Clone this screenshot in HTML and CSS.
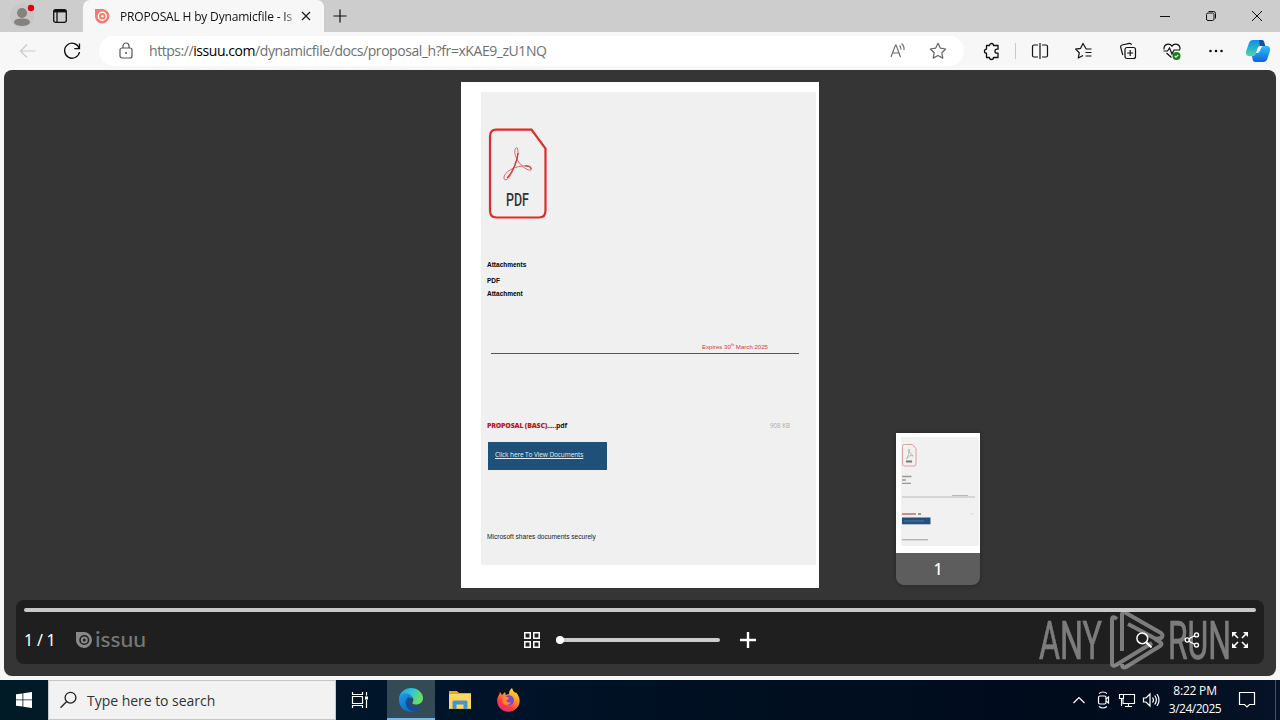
FILE: index.html
```html
<!DOCTYPE html>
<html lang="en">
<head>
<meta charset="utf-8">
<title>PROPOSAL H by Dynamicfile - Issuu</title>
<link rel="stylesheet" href="styles.css">
</head>
<body>
<div class="desktop">
  <header class="titlebar">
    <svg class="profile" width="32" height="32" viewBox="0 0 32 32"><circle cx="16" cy="16" r="12" fill="#c8c7c6"/><circle cx="16" cy="13" r="5" fill="#85817e"/><path d="M8 23c0-4 4-4.500 8-4.500s8 .5 8 4.500c-2 4-14 4-16 0z" fill="#85817e"/><circle cx="25" cy="8" r="3.200" fill="#e3000b"/></svg>
    <svg class="tab-menu" width="16" height="16" viewBox="0 0 16 16" fill="none" stroke="#111"><rect x="1.700" y="1.700" width="12.600" height="12.600" rx="2" stroke-width="1.300"/><path d="M2 3.200h12" stroke-width="2.400"/><path d="M5 4v10" stroke-width="1.300"/></svg>
    <div class="tab">
      <svg width="16" height="16" viewBox="0 0 16 16"><path d="M1 1h7.500A7.200 7.200 0 1 1 1 8z" fill="#f47c6e"/><circle cx="8.300" cy="8.200" r="4" fill="none" stroke="#fff" stroke-width="1.400"/><circle cx="8.300" cy="8.200" r="1.300" fill="#fff"/></svg>
      <span class="tab-title">PROPOSAL H by Dynamicfile - Is</span>
      <svg width="16" height="16" viewBox="0 0 16 16" stroke="#222" stroke-width="1.300"><path d="M4 4l8 8M12 4l-8 8"/></svg>
    </div>
    <svg class="new-tab" width="16" height="16" viewBox="0 0 16 16" stroke="#111" stroke-width="1.200"><path d="M8 1.500v13M1.500 8h13"/></svg>
    <div class="window-buttons">
      <svg width="46" height="32" viewBox="0 0 46 32" stroke="#111"><path d="M18 16.500h10"/></svg>
      <svg width="46" height="32" viewBox="0 0 46 32" stroke="#111" fill="none"><rect x="18.500" y="13" width="7.500" height="7.500" rx="1.500"/><path d="M20.500 11.500h5a2 2 0 0 1 2 2v5"/></svg>
      <svg width="46" height="32" viewBox="0 0 46 32" stroke="#111"><path d="M18 11l10 10M28 11l-10 10"/></svg>
    </div>
  </header>

  <nav class="toolbar">
    <svg class="back" width="20" height="20" viewBox="0 0 20 20" fill="none" stroke="#c9c9c9" stroke-width="1.200"><path d="M17.500 10h-15M9 3.500L2.500 10 9 16.500"/></svg>
    <svg class="refresh" width="20" height="20" viewBox="0 0 20 20" fill="none" stroke="#111" stroke-width="1.300"><path d="M17.300 7.500A7.500 7.500 0 1 0 17.500 11M17.500 2.500v5.200h-5.200"/></svg>
    <div class="omnibox">
      <svg class="lock" width="20" height="20" viewBox="0 0 20 20" fill="none" stroke="#555" stroke-width="1.200"><rect x="4" y="7" width="12" height="10" rx="2"/><path d="M7 7V5a3 3 0 0 1 6 0v2"/><circle cx="10" cy="12" r="1" fill="#555" stroke="none"/></svg>
      <span class="url">https://<b>issuu.com</b>/dynamicfile/docs/proposal_h?fr=xKAE9_zU1NQ</span>
      <svg class="read" width="20" height="20" viewBox="0 0 20 20" fill="none" stroke="#666" stroke-width="1.100"><path d="M3 16L7.500 4h.6L12.500 16M4.500 12h6.500M11.500 4.500q1.500 1.500 1.500 4M13.500 2.500q3 2.500 2.500 6.500"/></svg>
      <svg width="20" height="20" viewBox="0 0 20 20" fill="none" stroke="#666" stroke-width="1.200" stroke-linejoin="round"><path d="M10 2.300l2.400 4.900 5.300.8-3.900 3.700 1 5.400-4.800-2.600-4.800 2.600 1-5.400L2.300 8l5.300-.8z"/></svg>
    </div>
    <svg class="extensions" width="20" height="20" viewBox="0 0 20 20" fill="none" stroke="#111" stroke-width="1.300" stroke-linejoin="round"><path d="M5.500 4.500h3a2 2 0 0 1 4 0H17v3.700h-1a2 2 0 0 0 0 4h1v4.300h-4.500a2 2 0 0 1-4 0h-3v-4.300a2 2 0 0 1 0-4z"/></svg>
    <i class="divider"></i>
    <svg class="split" width="20" height="20" viewBox="0 0 20 20" fill="none" stroke="#111" stroke-width="1.200"><path d="M8 4H4Q2.500 4 2.500 5.500v9Q2.500 16 4 16h4M12 4h4q1.500 0 1.500 1.500v9Q17.500 16 16 16h-4M10 2v16"/></svg>
    <svg class="tool" width="20" height="20" viewBox="0 0 20 20" fill="none" stroke="#111" stroke-width="1.200" stroke-linejoin="round"><path d="M17.500 8h-5.300L9 2.500 6.600 7.300l-5 .8 3.700 3.600-1 5.300L9 14.500M11.500 11.500h6M11.500 15h6"/></svg>
    <svg class="tool" width="20" height="20" viewBox="0 0 20 20" fill="none" stroke="#111" stroke-width="1.200"><rect x="7" y="6.500" width="10.500" height="11" rx="2"/><path d="M12.200 9v6M9.200 12h6M4.800 14L2.600 6Q2.400 4.500 4 4l7.500-1.700q1.500-.2 2 1.600"/></svg>
    <svg class="tool" width="20" height="20" viewBox="0 0 20 20" fill="none" stroke="#111" stroke-width="1.200"><path d="M2 8.500C1.500 3 7.500 1.500 10 5.200 12.500 1.500 18.500 3 18 8.500M1.500 10h4l2-3 2.500 6 2-4h6M4.500 12l5 4.500"/><circle cx="14.500" cy="15" r="4" fill="#168216" stroke="none"/><path d="M12.800 15l1.200 1.200 2.300-2.300" stroke="#fff"/></svg>
    <svg class="tool" width="20" height="20" viewBox="0 0 20 20" fill="#111"><circle cx="4.500" cy="10" r="1.300"/><circle cx="10" cy="10" r="1.300"/><circle cx="15.500" cy="10" r="1.300"/></svg>
    <svg class="copilot" width="24" height="24" viewBox="0 0 24 24"><defs><linearGradient id="cg" x2="0" y2="1"><stop offset="0" stop-color="#128be8"/><stop offset=".55" stop-color="#28b6ce"/><stop offset="1" stop-color="#57d595"/></linearGradient><linearGradient id="cb" x2="0" y2="1"><stop offset="0" stop-color="#2bc0f4"/><stop offset="1" stop-color="#1263dd"/></linearGradient></defs><path d="M7 1h8q2 0 2.500 3l.5 3h-4q-2 0-3 4l-1 3q-1 3-4 3H2q-3-1-1.500-6L3 4q1-3 4-3z" fill="url(#cg)"/><path d="M13 1h3q2 0 2.500 3l.8 3H14z" fill="#174cab"/><path d="M17 7h5q3 1 1.600 6l-2.300 7q-1 3-4 3H9q-2 0-2.500-3L6 17q3 0 4-3h2q2-1 3-5z" fill="url(#cb)"/></svg>
  </nav>

  <main class="viewer">
    <article class="page">
      <div class="sheet">
        <svg class="pdf-logo" width="60" height="92" viewBox="0 0 60 92"><path d="M8 1.700H43.500L57.500 20.500V82.500Q57.500 89.500 51 89.500H8.500Q2 89.500 2 82.500V8.500Q2 1.700 8 1.700z" fill="none" stroke="#dc2b28" stroke-width="2.200"/><path d="M28 20c-2.500 3-1 8 2 13 4 6 10 10 13 9 2-3-4-4.500-9-4-9 1-17 6-18 11-.5 4 3 4 6-1 4-7 8-16 8-23 0-4-.8-6.500-2-5z" fill="none" stroke="#db6762" stroke-width="1"/><path d="M30 25c-1 8-5 19-11 25M37 38c4-.5 6 1 6 3" fill="none" stroke="#cf3531" stroke-width="1.200"/><text class="pdf-word" x="18" y="78" textLength="23" lengthAdjust="spacingAndGlyphs">PDF</text></svg>
        <h1 class="heading">Attachments</h1>
        <h2 class="kind">PDF</h2>
        <h2 class="kind-next">Attachment</h2>
        <p class="expires">Expires 30<sup>th</sup> March 2025</p>
        <div class="file-row"><span class="file"><b>PROPOSAL (BASC)</b>.....pdf</span><span class="size">908 KB</span></div>
        <a class="view-button"><span>Click here To View Documents</span></a>
        <p class="footnote">Microsoft shares documents securely</p>
      </div>
    </article>

    <aside class="thumb">
      <svg width="84" height="120" viewBox="0 0 84 120"><rect width="84" height="120" fill="#fff"/><rect x="5" y="4" width="78" height="109" fill="#f1f1f2"/><path d="M8.500 11.500h8l3.500 4V31q0 2-2 2H8.500q-2 0-2-2V13.500q0-2 2-2z" fill="none" stroke="#dfa0a0"/><path d="M13 16q-.5 3 4 7l-3-.5-3.500 3.500q3-4 2.500-10" fill="none" stroke="#aaa" stroke-width=".8"/><path d="M10 28.500h6" stroke="#777" stroke-width="2"/><path d="M6 43.500h9.500M6 47h4M6 50.300h9" stroke="#999" stroke-width="1.300"/><path d="M6 64h73" stroke="#ccc" stroke-width="1.500"/><path d="M56 62.500h16" stroke="#bbb"/><path d="M6 81h14" stroke="#bf7770" stroke-width="1.600"/><path d="M22 81h3" stroke="#777" stroke-width="1.500"/><path d="M74 81h4" stroke="#ddd"/><rect x="6" y="84.500" width="28.500" height="6.800" fill="#22517c"/><path d="M8 88h20" stroke="#6687a5" stroke-width=".8"/><path d="M6 106.800h26" stroke="#999"/></svg>
      <span class="thumb-number">1</span>
    </aside>

    <svg class="watermark" width="210" height="66" viewBox="0 0 210 66"><g class="mark-text"><text x="1" y="50.500" textLength="63" lengthAdjust="spacingAndGlyphs">ANY</text><text x="130" y="50.500" textLength="63" lengthAdjust="spacingAndGlyphs">RUN</text></g><g fill="none" stroke="#c9c9c9" stroke-width="4" stroke-linejoin="round"><path d="M79 11q-5-4-5 1v43q0 4 4 2l36-22"/><path d="M84 43V6q1-3 4-1l35 20q3 3 0 5l-5 1L90 16"/><path d="M117 31l5 3q3 2 0 4L88 59q-4 2-4-3"/></g></svg>

    <section class="controls">
      <div class="progress"></div>
      <div class="control-row">
        <span class="page-count">1 / 1</span>
        <svg class="issuu-mark" width="17" height="16" viewBox="0 0 17 16"><path d="M0 0h8.500A8 8 0 1 1 0 8z" fill="#898989"/><circle cx="8.300" cy="8" r="4.300" fill="none" stroke="#222" stroke-width="1.600"/><circle cx="8.300" cy="8" r="1.500" fill="#222"/></svg>
        <svg class="issuu-word" width="56" height="24" viewBox="0 0 56 24"><text x="-1" y="18.500" textLength="51" lengthAdjust="spacingAndGlyphs">issuu</text></svg>
        <svg class="grid-icon" width="16" height="16" viewBox="0 0 16 16" fill="none" stroke="#fff" stroke-width="1.500"><path d="M.8.8h5.400v5.400H.8zM9.800.8h5.400v5.400H9.800zM.8 9.800h5.400v5.400H.8zM9.800 9.800h5.400v5.400H9.800z"/></svg>
        <div class="zoom"><i class="knob"></i></div>
        <svg class="plus" width="16" height="16" viewBox="0 0 16 16" stroke="#fff" stroke-width="2.400"><path d="M8 0v16M0 8h16"/></svg>
        <div class="actions">
          <svg width="16" height="16" viewBox="0 0 16 16" fill="none" stroke="#fff"><circle cx="6.300" cy="6.300" r="5.400" stroke-width="1.500"/><path d="M10.200 10.200L15.500 15.500" stroke-width="2"/></svg>
          <svg width="16" height="16" viewBox="0 0 16 16" fill="none" stroke="#fff" stroke-width="1.400"><path d="M4.500 7l6.500-3.500M4.500 9l6.500 3.500"/><circle cx="3.200" cy="8" r="2.100"/><circle cx="12.500" cy="2.900" r="2"/><circle cx="12.500" cy="13.100" r="2"/></svg>
          <svg width="16" height="16" viewBox="0 0 16 16" stroke="#fff" stroke-width="1.600"><path d="M2 2l4 4M14 2l-4 4M2 14l4-4M14 14l-4-4"/><path d="M0 0h5L0 5zM16 0h-5l5 5zM0 16h5l-5-5zM16 16h-5l5-5z" fill="#fff" stroke="none"/></svg>
        </div>
      </div>
    </section>
  </main>

  <footer class="taskbar">
    <div class="start"><svg width="16" height="16" viewBox="0 0 16 16" fill="#fff"><path d="M0 2.300L6.500 1.400V7.500H0zM7.300 1.200L16 0v7.500H7.300zM0 8.300h6.500v6.300L0 13.700zM7.300 8.300H16V16l-8.700-1.200z"/></svg></div>
    <div class="search"><svg width="18" height="18" viewBox="0 0 18 18" fill="none" stroke="#222" stroke-width="1.300"><circle cx="10.500" cy="6.700" r="5.400"/><path d="M6.700 10.500L.5 16.700"/></svg><span>Type here to search</span></div>
    <svg class="task-view" width="18" height="18" viewBox="0 0 18 18" fill="none" stroke="#fff" stroke-width="1.200"><path d="M1.500 1v2.500h10V1M1.500 17v-2.500h10V17M1.500 5.500h10v7h-10zM15.500 1v3.500M15.500 9v8"/><path d="M14 5.500h3v3h-3z" fill="#fff" stroke="none"/></svg>
    <div class="app-active"><svg width="24" height="24" viewBox="0 0 24 24"><defs><linearGradient id="eg" x2="1" y2=".35"><stop offset="0" stop-color="#16a3e2"/><stop offset=".55" stop-color="#31c6d8"/><stop offset="1" stop-color="#6ade62"/></linearGradient><linearGradient id="eb" x2="1" y2="1"><stop offset="0" stop-color="#1c9ce6"/><stop offset="1" stop-color="#0b55a9"/></linearGradient></defs><path d="M0 11C.5 4 6 0 12 0c7 0 12 5 12 10 0 4-3 6.500-7 6.500-3 0-4-1-3.500-2 2.500-3 0-7-4.500-7C5 7.500 1 9 0 11z" fill="url(#eg)"/><path d="M0 12c0-6 5-7 8-6.500 4 .5 5.500 3.500 5 4.500-4 0-6 4-3.500 8 2.500 3.500 8 4 12.500.5-2 3.500-5.500 5.500-10 5.500C5 24 0 18.500 0 12z" fill="url(#eb)"/><path d="M9 9c-4 4-3 12 5 14.500 4-.5 6.500-2.500 8-5-5 2-9 1-11-2-1.500-2.500-.8-5 1-6z" fill="#0a4f98"/></svg></div>
    <svg class="explorer" width="22" height="20" viewBox="0 0 22 20"><path d="M0 1h8l2 2h12v16H0z" fill="#e5a823"/><path d="M0 4h22v14.500H0z" fill="#ffd75e"/><path d="M3.500 19v-7q0-1.500 1.500-1.500h12q1.500 0 1.500 1.500v7h-4v-4.500h-7V19z" fill="#4496d0"/></svg>
    <svg class="firefox" width="24" height="24" viewBox="0 0 24 24"><defs><linearGradient id="ff" x1=".8" x2=".2" y2="1"><stop offset="0" stop-color="#ffed35"/><stop offset=".35" stop-color="#ff9d22"/><stop offset=".7" stop-color="#ff3c45"/><stop offset="1" stop-color="#e52186"/></linearGradient></defs><path d="M3 4l2 3 3-3 .8 3 3.200-1q0-4 3-6 .5 3 3.500 5l.5-.8c6 6.800 4 14.800-1.500 17.800-5.500 3.500-13 1.500-16-4-2.500-5-1-9 .5-11z" fill="url(#ff)"/><path d="M9 8.500c3-3 8-.5 8 4 0 5-6.500 6.500-9 2.500l3-1.500-4-3.500z" fill="#7649d6"/><path d="M6 9q4-1.500 6 1-1.500 2.500-4 2.500 2 3 6 1.500-2 4-6.500 2.500Q4 14 6 9z" fill="#ff8a25"/></svg>
    <div class="tray">
      <svg width="24" height="24" viewBox="0 0 24 24" fill="none" stroke="#fff" stroke-width="1.200"><path d="M6.500 15L12 9.500l5.500 5.500"/></svg>
      <svg width="24" height="24" viewBox="0 0 24 24" fill="none" stroke="#fff" stroke-width="1.200"><rect x="7.500" y="8" width="7.500" height="8" rx="1.500"/><path d="M15 11l2.500-2v6L15 13M8 5.500q4-3 8 0M8 18.500q4 3 8 0"/></svg>
      <svg width="24" height="24" viewBox="0 0 24 24" fill="none" stroke="#fff" stroke-width="1.100"><path d="M9 6.500h10.500v9H8v-5M13.500 15.500v3M10 18.500h7M4.500 6.500h4v4h-4zM6.500 10.500v7.500"/></svg>
      <svg width="24" height="24" viewBox="0 0 24 24" fill="none" stroke="#fff" stroke-width="1.200"><path d="M4.500 10h2.500l4-4v12l-4-4H4.500zM13.500 9.500q2 2.500 0 5M15.700 7.500q3.300 4.500 0 9M18 6q4 6 0 12"/></svg>
      <div class="clock"><span class="time">8:22 PM</span><span class="date">3/24/2025</span></div>
      <svg class="notice" width="18" height="18" viewBox="0 0 18 18" fill="none" stroke="#fff" stroke-width="1.200"><path d="M1.500 1.500h15v12h-5L9 16l-2.500-2.500h-5z"/></svg>
      <i class="peek"></i>
    </div>
  </footer>
</div>
</body>
</html>
```
FILE: styles.css
```css
* { box-sizing: border-box; }
body { margin: 0; background: #f7f7f7; font-family: "Open Sans", "Noto Sans", sans-serif; color: #111; }
h1, h2, p { margin: 0; }
svg { display: block; flex: none; }
.desktop { width: 1280px; height: 720px; display: flex; flex-direction: column; overflow: hidden; }

.titlebar { height: 32px; flex: none; display: flex; align-items: center; background: #cdcdcd; }
.profile { margin-left: 6px; }
.tab-menu { margin-left: 14px; }
.tab { width: 241px; height: 32px; margin-left: 15px; padding: 0 10px 0 11px; display: flex; align-items: center; background: #f7f7f7; border-radius: 7px 7px 0 0; }
.tab-title { width: 174px; margin: 0 4px 0 10px; flex: none; white-space: nowrap; font-size: 12px; letter-spacing: -.17px; color: transparent; background: linear-gradient(90deg, #111 94%, #aaa 100%); background-clip: text; -webkit-background-clip: text; }
.new-tab { margin-left: 8px; }
.window-buttons { display: flex; margin-left: auto; }

.toolbar { height: 38px; flex: none; display: flex; align-items: center; background: #f7f7f7; }
.back { margin-left: 18px; }
.refresh { margin-left: 24px; }
.omnibox { width: 865px; height: 30px; margin-left: 17px; padding: 0 16px 0 17px; border-radius: 15px; background: #fff; display: flex; align-items: center; }
.url { margin-left: 13px; font-size: 14px; line-height: 20px; letter-spacing: -.44px; color: #707070; white-space: nowrap; }
.url b { font-weight: 400; color: #000; }
.read { margin-left: auto; margin-right: 20px; }
.extensions { margin-left: 17px; }
.divider { width: 1px; height: 16px; margin-left: 14px; background: #c8c8c8; }
.split { margin-left: 14px; }
.tool { margin-left: 24px; }
.copilot { margin-left: 20px; }

.viewer { position: relative; height: 606px; flex: none; margin: 0 4px 4px; padding: 12px; border-radius: 8px; background: #353535; display: flex; flex-direction: column; }
.page { width: 358px; height: 506px; flex: none; margin-left: 445px; padding: 10px 3px 0 20px; background: #fff; }
.sheet { width: 335px; height: 473px; padding: 36px 0 0 6px; background: #f0f0f0; color: #1b1b1b; font-family: "Liberation Sans", Arial, sans-serif; font-size: 6.500px; line-height: 10px; white-space: nowrap; }
.pdf-logo { margin-left: 1px; }
.pdf-word { font: 500 18px Roboto, sans-serif; fill: #333; }
.heading { margin-top: 40px; font-size: 6.500px; line-height: 10px; color: #000; }
.kind { margin-top: 6px; font-size: 6.500px; line-height: 10px; color: #000; }
.kind-next { margin-top: 3px; font-size: 6.500px; line-height: 10px; color: #000; }
.expires { width: 308px; height: 13px; margin: 42px 0 0 4px; padding: 1px 0 0 211px; border-bottom: 1px solid #555; color: #d93634; font-size: 6.100px; }
.expires sup { font-size: 4px; line-height: 0; }
.file-row { height: 10px; margin-top: 67px; display: flex; justify-content: space-between; padding-right: 26px; font-size: 7px; font-family: "Open Sans", sans-serif; }
.file { font-weight: 700; letter-spacing: -.21px; }
.file b { color: #b52025; }
.size { font-size: 6.200px; color: #aaa; }
.view-button { display: flex; align-items: center; width: 119px; height: 28px; margin: 10.500px 0 0 1px; padding: 0 0 2px 7px; background: #1f5079; color: #e4edf4; font: 6.500px/10px "Open Sans", sans-serif; letter-spacing: -.1px; text-decoration: underline; }
.footnote { margin-top: 62.500px; font-size: 6.600px; }

.thumb { position: absolute; left: 892px; top: 363px; width: 84px; height: 152px; border-radius: 0 0 8px 8px; overflow: hidden; background: #5d5d5d; box-shadow: 0 0 5px rgba(0,0,0,.3); }
.thumb-number { display: block; height: 32px; color: #fff; text-align: center; font: 500 16px/32px "Noto Sans", sans-serif; }

.controls { height: 64px; flex: none; margin-top: 12px; padding: 8px; border-radius: 8px; background: #1f1f1f; }
.progress { height: 4px; border-radius: 2px; background: #c9c9c9; }
.control-row { height: 24px; margin-top: 16px; display: flex; align-items: center; }
.page-count { width: 52px; color: #fff; font: 16px/24px "Noto Sans", sans-serif; letter-spacing: -.2px; white-space: nowrap; }
.issuu-word { margin-left: 3px; }
.issuu-word text { font: 500 21px Lato, sans-serif; fill: #777; }
.grid-icon { margin-left: 372px; }
.zoom { position: relative; width: 164px; height: 4px; margin-left: 16px; border-radius: 2px; background: #ccc; }
.knob { position: absolute; left: 0; top: -2px; width: 8px; height: 8px; border-radius: 50%; background: #fff; }
.plus { margin-left: 20px; }
.actions { position: relative; z-index: 2; display: flex; gap: 32px; margin-left: auto; margin-right: 8px; }
.watermark { position: absolute; z-index: 1; left: 1034px; top: 538px; opacity: .55; }
.mark-text { font: 400 53px Roboto, sans-serif; fill: #c9c9c9; stroke: #c9c9c9; stroke-width: .7px; }

.taskbar { height: 40px; flex: none; display: flex; align-items: center; background: linear-gradient(90deg, #001b25, #00142a 35%, #000f20 60%, #000b1c 85%, #061227); color: #fff; }
.start { width: 48px; display: flex; justify-content: center; }
.search { width: 288px; height: 40px; padding-left: 11px; display: flex; align-items: center; border: 1px solid #c6c6c6; background: #f2f2f2; color: #333; font-size: 14px; letter-spacing: -.03px; }
.search span { margin-left: 9px; white-space: nowrap; }
.task-view { margin-left: 15px; }
.app-active { width: 48px; height: 40px; margin-left: 18px; padding-top: 2px; display: flex; align-items: center; justify-content: center; background: #344b55; border-bottom: 2px solid #76b9ed; }
.explorer { margin-left: 14px; }
.firefox { margin-left: 26px; }
.tray { height: 40px; display: flex; align-items: center; margin-left: auto; }
.clock { width: 64px; display: flex; flex-direction: column; align-items: center; font-size: 12px; line-height: 18px; letter-spacing: -.3px; white-space: nowrap; }
.time { letter-spacing: -.2px; }
.date { letter-spacing: -.5px; }
.notice { margin-left: 11px; }
.peek { width: 1px; height: 40px; margin: 0 4px 0 19px; background: #46505f; }
```
